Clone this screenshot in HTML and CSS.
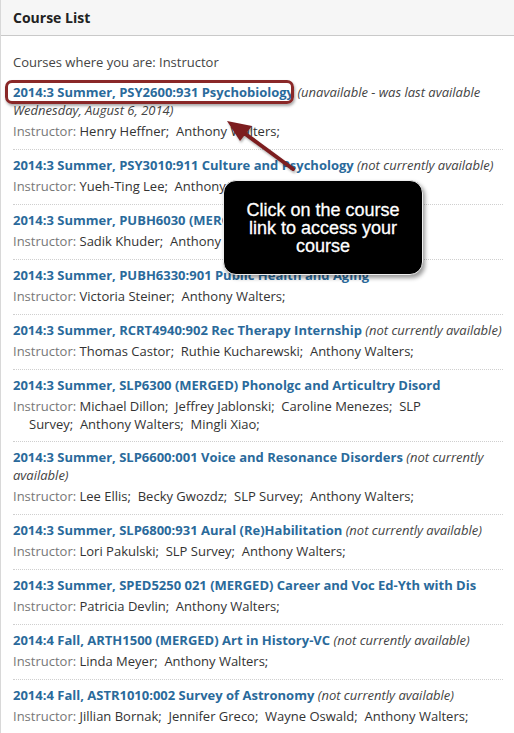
FILE: index.html
```html
<!DOCTYPE html>
<html lang="en">
<head>
    <meta charset="UTF-8">
    <title>Course List</title>
    <link rel="stylesheet" href="styles.css">
</head>
<body>
    <div class="panel">
        <div class="panel-header">Course List</div>

        <div class="panel-body">
            <p class="intro">Courses where you are: Instructor</p>

            <ul class="course-list">
                <li class="course">
                    <div class="course-title"><a href="#">2014:3 Summer, PSY2600:931 Psychobiology</a> <em>(unavailable - was last available Wednesday, August 6, 2014)</em></div>
                    <div class="instructors"><span class="label">Instructor:</span> Henry Heffner;&nbsp; Anthony Walters;</div>
                </li>
                <li class="course">
                    <div class="course-title"><a href="#">2014:3 Summer, PSY3010:911 Culture and Psychology</a> <em>(not currently available)</em></div>
                    <div class="instructors"><span class="label">Instructor:</span> Yueh-Ting Lee;&nbsp; Anthony Walters;</div>
                </li>
                <li class="course">
                    <div class="course-title"><a href="#">2014:3 Summer, PUBH6030 (MERGED) Environmental Health</a></div>
                    <div class="instructors"><span class="label">Instructor:</span> Sadik Khuder;&nbsp; Anthony Walters;</div>
                </li>
                <li class="course">
                    <div class="course-title"><a href="#">2014:3 Summer, PUBH6330:901 Public Health and Aging</a></div>
                    <div class="instructors"><span class="label">Instructor:</span> Victoria Steiner;&nbsp; Anthony Walters;</div>
                </li>
                <li class="course">
                    <div class="course-title"><a href="#">2014:3 Summer, RCRT4940:902 Rec Therapy Internship</a> <em>(not currently available)</em></div>
                    <div class="instructors"><span class="label">Instructor:</span> Thomas Castor;&nbsp; Ruthie Kucharewski;&nbsp; Anthony Walters;</div>
                </li>
                <li class="course">
                    <div class="course-title"><a href="#">2014:3 Summer, SLP6300 (MERGED) Phonolgc and Articultry Disord</a></div>
                    <div class="instructors"><span class="label">Instructor:</span> Michael Dillon;&nbsp; Jeffrey Jablonski;&nbsp; Caroline Menezes;&nbsp; SLP<br>Survey;&nbsp; Anthony Walters;&nbsp; Mingli Xiao;</div>
                </li>
                <li class="course">
                    <div class="course-title"><a href="#">2014:3 Summer, SLP6600:001 Voice and Resonance Disorders</a> <em>(not currently available)</em></div>
                    <div class="instructors"><span class="label">Instructor:</span> Lee Ellis;&nbsp; Becky Gwozdz;&nbsp; SLP Survey;&nbsp; Anthony Walters;</div>
                </li>
                <li class="course">
                    <div class="course-title"><a href="#">2014:3 Summer, SLP6800:931 Aural (Re)Habilitation</a> <em>(not currently available)</em></div>
                    <div class="instructors"><span class="label">Instructor:</span> Lori Pakulski;&nbsp; SLP Survey;&nbsp; Anthony Walters;</div>
                </li>
                <li class="course">
                    <div class="course-title"><a href="#">2014:3 Summer, SPED5250 021 (MERGED) Career and Voc Ed-Yth with Dis</a></div>
                    <div class="instructors"><span class="label">Instructor:</span> Patricia Devlin;&nbsp; Anthony Walters;</div>
                </li>
                <li class="course">
                    <div class="course-title"><a href="#">2014:4 Fall, ARTH1500 (MERGED) Art in History-VC</a> <em>(not currently available)</em></div>
                    <div class="instructors"><span class="label">Instructor:</span> Linda Meyer;&nbsp; Anthony Walters;</div>
                </li>
                <li class="course">
                    <div class="course-title"><a href="#">2014:4 Fall, ASTR1010:002 Survey of Astronomy</a> <em>(not currently available)</em></div>
                    <div class="instructors"><span class="label">Instructor:</span> Jillian Bornak;&nbsp; Jennifer Greco;&nbsp; Wayne Oswald;&nbsp; Anthony Walters;</div>
                </li>
            </ul>
        </div>
    </div>

    <!-- screenshot annotations -->
    <div class="highlight"></div>
    <svg class="arrow" width="514" height="733" viewBox="0 0 514 733">
        <line x1="293" y1="169" x2="240" y2="130" stroke="#7c1d1f" stroke-width="4" stroke-linecap="round"/>
        <polygon points="227,121 252,126 240,141" fill="#7c1d1f"/>
    </svg>
    <div class="callout">Click on the course link to access your course</div>
</body>
</html>
```

FILE: styles.css
```css
:root {
    --link-blue: #2a6a9b;
    --text-dark: #333333;
    --text-muted: #777777;
    --rule: #cfcfcf;
    --note-red: #8a2828;
}

body {
    margin: 0;
    font-family: 'Open Sans', 'Liberation Sans', sans-serif;
    font-size: 13px;
    color: var(--text-dark);
    background: #ffffff;
}

.panel {
    border-left: 1px solid #d8d8d8;
    min-height: 733px;
    box-sizing: border-box;
}

.panel-header {
    height: 35px;
    line-height: 35px;
    padding: 0 12px;
    background: #f6f6f6;
    border-bottom: 1px solid #c9c9c9;
    font-weight: bold;
    font-size: 14px;
    color: #222222;
}

.panel-body {
    padding: 17px 11px 0 12px;
}

.intro {
    margin: 0 0 13px 0;
    line-height: 18px;
    color: #444444;
}

.course-list {
    list-style: none;
    margin: 0;
    padding: 0;
}

.course {
    padding: 7px 0 8px 0;
    border-bottom: 1px dotted var(--rule);
}

.course:first-child {
    padding-top: 0;
}

.course-title {
    line-height: 17.5px;
    margin-bottom: 4px;
}

.course-title a {
    color: var(--link-blue);
    font-weight: bold;
    text-decoration: none;
}

.course-title em {
    color: #444444;
}

.instructors {
    line-height: 17.5px;
    padding-left: 16px;
    text-indent: -16px;
}

.instructors .label {
    color: var(--text-muted);
}

/* annotations drawn over the screenshot */
.highlight {
    position: absolute;
    left: 5px;
    top: 80px;
    width: 283px;
    height: 18px;
    border: 3px solid var(--note-red);
    border-radius: 7px;
    box-shadow: 1px 2px 3px rgba(0, 0, 0, 0.35);
}

.arrow {
    position: absolute;
    left: 0;
    top: 0;
    pointer-events: none;
    filter: drop-shadow(1px 2px 1px rgba(0, 0, 0, 0.3));
}

.callout {
    position: absolute;
    left: 223px;
    top: 180px;
    width: 200px;
    height: 95px;
    box-sizing: border-box;
    padding: 0 20px;
    background: #000000;
    border: 1px solid #eeeeee;
    border-radius: 13px;
    box-shadow: 2px 3px 4px rgba(0, 0, 0, 0.4);
    color: #ffffff;
    font-family: 'Liberation Sans', Arial, sans-serif;
    font-size: 18px;
    line-height: 18px;
    text-align: center;
    display: flex;
    align-items: center;
    justify-content: center;
    -webkit-text-stroke: 0.3px #ffffff;
}
```
